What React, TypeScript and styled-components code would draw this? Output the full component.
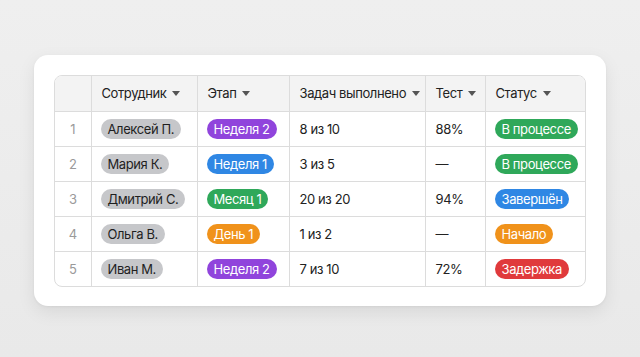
import styled, { createGlobalStyle } from 'styled-components';

const GlobalStyle = createGlobalStyle`
  html, body {
    margin: 0;
    padding: 0;
    background: #ececec;
    font-family: Inter, "Noto Sans", sans-serif;
  }
`;

const Page = styled.div`
  width: 640px;
  height: 357px;
  display: flex;
  align-items: flex-start;
  justify-content: center;
  padding-top: 55px;
  box-sizing: border-box;
  background: linear-gradient(180deg, #efefef 0%, #e9e9e9 100%);
`;

const Card = styled.div`
  width: 572px;
  height: 251px;
  box-sizing: border-box;
  padding: 20px;
  background: #fff;
  border-radius: 14px;
  box-shadow: 0 6px 18px rgba(0, 0, 0, 0.08), 0 1px 3px rgba(0, 0, 0, 0.05);
`;

const TableFrame = styled.div`
  border: 1px solid #dcdcdc;
  border-radius: 8px;
  overflow: hidden;
`;

const Table = styled.table`
  width: 530px;
  border-collapse: collapse;
  table-layout: fixed;
  font-size: 13px;
  letter-spacing: -0.4px;
  color: #222;
`;

const HeadCell = styled.th<{ $w: number }>`
  box-sizing: border-box;
  width: ${p => p.$w}px;
  height: 35px;
  padding: 0 10px;
  background: #f3f3f3;
  text-align: left;
  font-weight: 400;
  border-left: 1px solid #dcdcdc;
  border-bottom: 1px solid #dcdcdc;
  white-space: nowrap;
  &:first-child {
    border-left: none;
  }
`;

const Caret = styled.span`
  display: inline-block;
  margin-left: 6px;
  vertical-align: 2px;
  width: 0;
  height: 0;
  border-left: 4.5px solid transparent;
  border-right: 4.5px solid transparent;
  border-top: 5px solid #555;
`;

const Row = styled.tr`
  &:not(:last-child) td {
    border-bottom: 1px solid #dcdcdc;
  }
`;

const Cell = styled.td`
  box-sizing: border-box;
  height: 35px;
  padding: 0 10px;
  border-left: 1px solid #dcdcdc;
  white-space: nowrap;
  &:first-child {
    border-left: none;
  }
`;

const NumCell = styled(Cell)`
  text-align: center;
  color: #9a9a9a;
  padding: 0;
`;

const Pill = styled.span<{ $bg: string; $fg?: string }>`
  display: inline-block;
  height: 20px;
  line-height: 20px;
  padding: 0 7px;
  margin-left: -1px;
  border-radius: 10px;
  background: ${p => p.$bg};
  color: ${p => p.$fg ?? '#fff'};
`;

const colors = {
  grey: '#c6c7ca',
  purple: '#9044dc',
  blue: '#2f87e4',
  green: '#2fa85a',
  orange: '#f0921b',
  red: '#e03a3c',
};

type Rec = {
  name: string;
  stage: string;
  stageColor: string;
  done: string;
  test: string;
  status: string;
  statusColor: string;
};

const rows: Rec[] = [
  { name: 'Алексей П.', stage: 'Неделя 2', stageColor: colors.purple, done: '8 из 10', test: '88%', status: 'В процессе', statusColor: colors.green },
  { name: 'Мария К.', stage: 'Неделя 1', stageColor: colors.blue, done: '3 из 5', test: '—', status: 'В процессе', statusColor: colors.green },
  { name: 'Дмитрий С.', stage: 'Месяц 1', stageColor: colors.green, done: '20 из 20', test: '94%', status: 'Завершён', statusColor: colors.blue },
  { name: 'Ольга В.', stage: 'День 1', stageColor: colors.orange, done: '1 из 2', test: '—', status: 'Начало', statusColor: colors.orange },
  { name: 'Иван М.', stage: 'Неделя 2', stageColor: colors.purple, done: '7 из 10', test: '72%', status: 'Задержка', statusColor: colors.red },
];

const columns: [string, number][] = [
  ['', 36],
  ['Сотрудник', 106],
  ['Этап', 92],
  ['Задач выполнено', 136],
  ['Тест', 60],
  ['Статус', 100],
];

export default function App() {
  return (
    <Page>
      <GlobalStyle />
      <Card>
        <TableFrame>
          <Table>
            <thead>
              <tr>
                {columns.map(([title, w]) => (
                  <HeadCell key={w + title} $w={w}>
                    {title}
                    {title && <Caret />}
                  </HeadCell>
                ))}
              </tr>
            </thead>
            <tbody>
              {rows.map((r, i) => (
                <Row key={r.name}>
                  <NumCell>{i + 1}</NumCell>
                  <Cell>
                    <Pill $bg={colors.grey} $fg="#1f1f1f">{r.name}</Pill>
                  </Cell>
                  <Cell>
                    <Pill $bg={r.stageColor}>{r.stage}</Pill>
                  </Cell>
                  <Cell>{r.done}</Cell>
                  <Cell>{r.test}</Cell>
                  <Cell>
                    <Pill $bg={r.statusColor}>{r.status}</Pill>
                  </Cell>
                </Row>
              ))}
            </tbody>
          </Table>
        </TableFrame>
      </Card>
    </Page>
  );
}
